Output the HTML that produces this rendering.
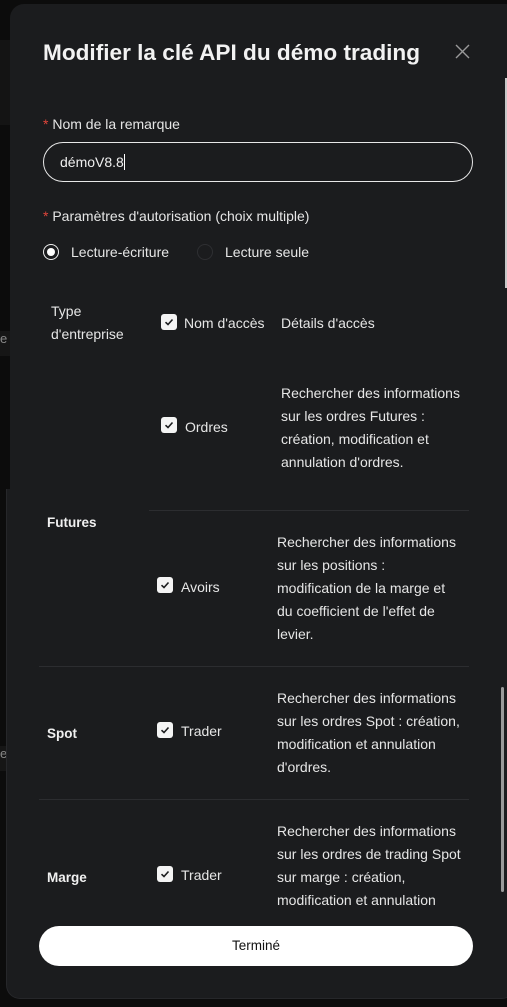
<!DOCTYPE html>
<html><head><meta charset="utf-8"><style>
*{margin:0;padding:0;box-sizing:border-box}
body{width:507px;height:1007px;background:#0c0c0c;position:relative;overflow:hidden;font-family:"Liberation Sans",Arial,sans-serif;color:#e8e8e8}
.a{position:absolute;white-space:nowrap}
.m1{position:absolute;left:10px;top:4px;width:510px;height:500px;background:#1b1c1e;border-radius:14px}
.m2{position:absolute;left:6px;top:489px;width:510px;height:510px;background:#1b1c1e;border-radius:0 0 14px 14px;border-left:1px solid #26272a;border-bottom:1px solid #26272a}
.t{font-size:14px;color:#e6e6e6}
.cb{position:absolute;width:16px;height:16px;background:#f4f4f4;border-radius:3px}
.cb svg{position:absolute;left:3px;top:3px}
.desc{position:absolute;font-size:14px;line-height:23px;color:#e6e6e6;white-space:nowrap}
.hr{position:absolute;height:1px;background:#2c2d30}
.b{font-weight:bold;font-size:13.5px;color:#f0f0f0}
</style></head><body>
<div class="a" style="left:0;top:40px;width:10px;height:85px;background:#141414"></div>
<div class="a" style="left:0;top:331px;width:10px;height:25px;background:#161616;color:#888;font-size:13px">e</div>
<div class="a" style="left:0;top:746px;width:6px;height:25px;background:#161616;color:#888;font-size:13px">e</div>
<div class="m1"></div>
<div class="m2"></div>
<div class="a" style="left:505px;top:78px;width:2px;height:210px;background:#c8c8c8"></div>
<div class="a" style="left:501px;top:687px;width:3px;height:205px;background:#9a9a9a;border-radius:2px"></div>

<div class="a" style="left:43px;top:40px;font-size:22.6px;font-weight:bold;color:#f2f2f2">Modifier la clé API du démo trading</div>
<svg class="a" style="left:455px;top:44px" width="15" height="15" viewBox="0 0 15 15"><path d="M1 1L14 14M14 1L1 14" stroke="#9a9a9a" stroke-width="1.4"/></svg>

<div class="a t" style="left:43px;top:116px"><span style="color:#e0453a">*</span> Nom de la remarque</div>
<div class="a" style="left:43px;top:142px;width:430px;height:40px;border:1px solid #e8e8e8;border-radius:20px"></div>
<div class="a t" style="left:60px;top:154px;color:#f0f0f0">démoV8.8<span style="display:inline-block;width:1px;height:16px;background:#fff;vertical-align:-3px"></span></div>

<div class="a t" style="left:43px;top:208px"><span style="color:#e0453a">*</span> Paramètres d'autorisation (choix multiple)</div>
<div class="a" style="left:43px;top:244px;width:16px;height:16px;border:1.5px solid #eee;border-radius:50%"></div>
<div class="a" style="left:47px;top:248px;width:8px;height:8px;background:#fff;border-radius:50%"></div>
<div class="a t" style="left:71px;top:244px">Lecture-écriture</div>
<div class="a" style="left:197px;top:244px;width:16px;height:16px;border:1px solid #2e2f32;border-radius:50%"></div>
<div class="a t" style="left:225px;top:244px">Lecture seule</div>

<div class="a t" style="left:51px;top:300px;line-height:23px">Type<br>d'entreprise</div>
<div class="cb" style="left:161px;top:314px"><svg width="10" height="10" viewBox="0 0 10 10"><path d="M1.5 5.2L4 7.5L8.5 2.5" stroke="#1b1c1e" stroke-width="1.6" fill="none"/></svg></div>
<div class="a t" style="left:184px;top:315px">Nom d'accès</div>
<div class="a t" style="left:281px;top:315px">Détails d'accès</div>

<div class="cb" style="left:161px;top:417px"><svg width="10" height="10" viewBox="0 0 10 10"><path d="M1.5 5.2L4 7.5L8.5 2.5" stroke="#1b1c1e" stroke-width="1.6" fill="none"/></svg></div>
<div class="a t" style="left:185px;top:419px">Ordres</div>
<div class="desc" style="left:281px;top:382px">Rechercher des informations<br>sur les ordres Futures :<br>création, modification et<br>annulation d'ordres.</div>
<div class="hr" style="left:149px;top:510px;width:320px"></div>

<div class="a b" style="left:47px;top:515px">Futures</div>
<div class="cb" style="left:157px;top:577px"><svg width="10" height="10" viewBox="0 0 10 10"><path d="M1.5 5.2L4 7.5L8.5 2.5" stroke="#1b1c1e" stroke-width="1.6" fill="none"/></svg></div>
<div class="a t" style="left:181px;top:579px">Avoirs</div>
<div class="desc" style="left:277px;top:531px">Rechercher des informations<br>sur les positions :<br>modification de la marge et<br>du coefficient de l'effet de<br>levier.</div>
<div class="hr" style="left:39px;top:666px;width:430px"></div>

<div class="a b" style="left:47px;top:726px">Spot</div>
<div class="cb" style="left:157px;top:722px"><svg width="10" height="10" viewBox="0 0 10 10"><path d="M1.5 5.2L4 7.5L8.5 2.5" stroke="#1b1c1e" stroke-width="1.6" fill="none"/></svg></div>
<div class="a t" style="left:181px;top:723px">Trader</div>
<div class="desc" style="left:277px;top:687px">Rechercher des informations<br>sur les ordres Spot : création,<br>modification et annulation<br>d'ordres.</div>
<div class="hr" style="left:39px;top:799px;width:430px"></div>

<div style="position:absolute;left:0;top:800px;width:507px;height:112px;overflow:hidden">
<div class="a b" style="left:47px;top:70px">Marge</div>
<div class="cb" style="left:157px;top:66px"><svg width="10" height="10" viewBox="0 0 10 10"><path d="M1.5 5.2L4 7.5L8.5 2.5" stroke="#1b1c1e" stroke-width="1.6" fill="none"/></svg></div>
<div class="a t" style="left:181px;top:67px">Trader</div>
<div class="desc" style="left:277px;top:20px">Rechercher des informations<br>sur les ordres de trading Spot<br>sur marge : création,<br>modification et annulation<br>d'ordres.</div>
</div>

<div class="a" style="left:39px;top:926px;width:434px;height:40px;background:#fff;border-radius:20px;color:#111;font-size:13.5px;text-align:center;line-height:40px">Terminé</div>
</body></html>
